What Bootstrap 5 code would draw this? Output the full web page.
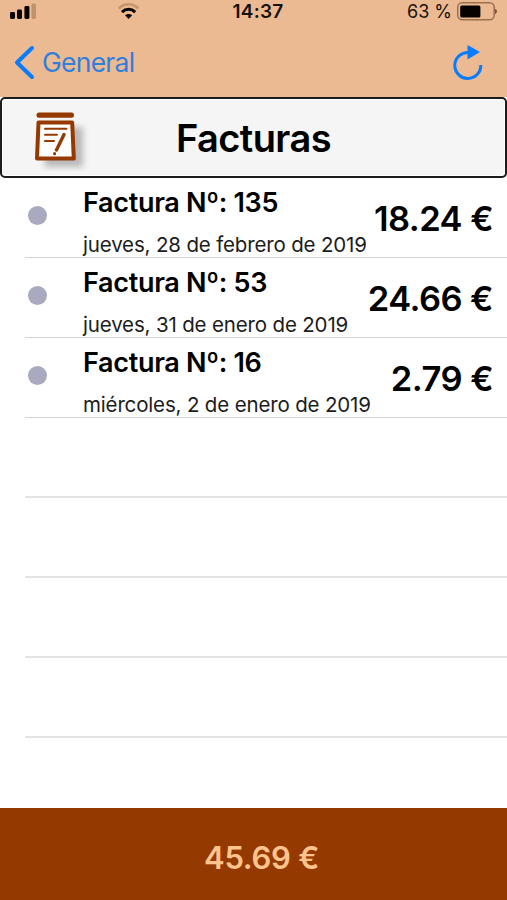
<!DOCTYPE html>
<html lang="es">
<head>
<meta charset="utf-8">
<meta name="viewport" content="width=device-width, initial-scale=1">
<title>Facturas</title>
<link href="https://cdn.jsdelivr.net/npm/bootstrap@5.3.0/dist/css/bootstrap.min.css" rel="stylesheet">
<style>
  body { font-family: Inter, "Liberation Sans", sans-serif; color: #000; }
  .screen { height: 900px; }
  svg { display: block; flex: none; }
  .app-top { height: 97px; background: #ebba93; }
  .status { height: 24px; padding: 0 9px; font-size: 18px; line-height: 24px; color: #17110c; }
  .status-side { flex: 1 1 0; }
  .clock { font-size: 19px; font-weight: 600; letter-spacing: .2px; padding-left: 9px; }
  .wifi { margin-left: 81px; }
  .navline { height: 73px; padding: 4px 23px 0 14px; }
  .back { color: #2f7fdc; font-size: 26.500px; letter-spacing: -.75px; line-height: 32px; }
  .back span { margin-top: -1px; }
  .heading { height: 81px; border: 2px solid #1c1c1e; border-radius: 5px; background: #f5f5f5; box-shadow: inset 0 0 0 1px #fff; padding: 0 24px 0 32px; }
  .heading h1 { font-size: 38px; font-weight: 600; line-height: 46px; letter-spacing: -.6px; }
  .line-row { height: 80px; margin-left: 25px; border-bottom: 2px solid #e3e3e5; }
  article.line-row { border-bottom: 1px solid #d3d3d5; }
  .dot { width: 19px; height: 19px; background: #a8abc0; margin: 28px 0 0 3px; }
  .detail { margin-left: 36px; }
  .number { font-size: 27px; font-weight: 600; line-height: 32px; letter-spacing: -.3px; margin-top: 9px; }
  .date { font-size: 20.500px; line-height: 24px; letter-spacing: -.16px; margin-top: 14px; color: #1c1c1c; }
  .price { font-size: 34.500px; font-weight: 600; line-height: 40px; letter-spacing: -.55px; margin-top: 21px; padding-right: 14px; }
  .total { height: 92px; background: #943a00; color: #ffc38f; font-size: 31px; font-weight: 600; letter-spacing: -.3px; padding: 8px 0 0 16px; }
</style>
</head>
<body class="bg-white">
<div class="screen d-flex flex-column overflow-hidden">
  <header class="app-top">
    <div class="status d-flex align-items-center">
      <div class="status-side d-flex align-items-center">
        <svg width="28" height="24" viewBox="0 0 28 24"><g fill="#080402"><rect x="1" y="12" width="5" height="7" rx="1.4"/><rect x="8" y="9.500" width="5" height="9.500" rx="1.400"/><rect x="15.400" y="6" width="5" height="13" rx="1.400"/></g><rect x="22.500" y="3.500" width="4.500" height="15.500" rx="1.400" fill="#be946f"/></svg>
        <svg class="wifi" width="22" height="24" viewBox="0 0 22 24" fill="none" stroke-width="2.600"><path d="M.8 8.500C6.300 2.900 14.900 2.900 20.400 8.500" stroke="#c49770"/><path d="M4 12.100C7.800 8.400 13.400 8.400 17.200 12.100" stroke="#080402" stroke-width="3"/><path d="M7 15.300Q10.600 12.500 14.200 15.300L10.600 19Z" fill="#080402"/></svg>
      </div>
      <span class="clock">14:37</span>
      <div class="status-side d-flex align-items-center justify-content-end">
        <span>63 %</span>
        <svg width="42" height="24" viewBox="0 0 42 24" class="ms-1"><rect x="1.700" y="2.800" width="36.500" height="17" rx="4.500" fill="none" stroke="#997150" stroke-width="1.500"/><rect x="4.200" y="5.400" width="20.200" height="12" rx="1.500" fill="#050200"/><path d="M39.500 9q2.300 2.300 0 4.600Z" fill="#80583b" stroke="#80583b"/></svg>
      </div>
    </div>
    <nav class="navline d-flex align-items-center justify-content-between">
      <a href="#" class="back d-flex align-items-center text-decoration-none">
        <svg width="28" height="36" viewBox="0 0 28 36" fill="none" stroke="#087cff" stroke-width="4" stroke-linecap="round" stroke-linejoin="round"><path d="M18 3L3 17.500 18 32"/></svg>
        <span>General</span>
      </a>
      <svg width="32" height="38" viewBox="0 0 32 38"><path d="M17 8.500A13 13 0 1 0 28.800 21" fill="none" stroke="#087cff" stroke-width="3"/><path d="M15.500 1L28 8 15.500 15.500Z" fill="#087cff"/></svg>
    </nav>
  </header>
  <section class="heading d-flex align-items-center position-relative">
    <svg width="56" height="66" viewBox="0 0 56 66">
      <defs><filter id="soft" x="-30%" y="-30%" width="160%" height="160%"><feGaussianBlur stdDeviation="3"/></filter></defs>
      <path d="M11 22H49V62H11Z" fill="#b9b9b9" filter="url(#soft)"/>
      <rect x="2.500" y="7.500" width="37.500" height="5.200" rx="2.500" fill="#943a00"/>
      <path d="M4.500 17.500H38.200L39.800 53.500H3Z" fill="#fff" stroke="#943a00" stroke-width="4" stroke-linejoin="round"/>
      <path d="M11 23.700H32.500M11 29.700H23M11 36H20" stroke="#943a00" stroke-width="2" stroke-linecap="round"/>
      <path d="M30 29.500L22.500 45" stroke="#943a00" stroke-width="3.400" stroke-linecap="round"/><circle cx="20.600" cy="48.700" r="1.600" fill="#943a00"/>
    </svg>
    <h1 class="position-absolute start-0 end-0 text-center m-0">Facturas</h1>
  </section>
  <main class="flex-grow-1">
    <article class="line-row d-flex align-items-start">
      <span class="dot rounded-circle"></span>
      <div class="detail"><div class="number">Factura Nº: 135</div><div class="date">jueves, 28 de febrero de 2019</div></div>
      <div class="price ms-auto text-nowrap">18.24 €</div>
    </article>
    <article class="line-row d-flex align-items-start">
      <span class="dot rounded-circle"></span>
      <div class="detail"><div class="number">Factura Nº: 53</div><div class="date">jueves, 31 de enero de 2019</div></div>
      <div class="price ms-auto text-nowrap">24.66 €</div>
    </article>
    <article class="line-row d-flex align-items-start">
      <span class="dot rounded-circle"></span>
      <div class="detail"><div class="number">Factura Nº: 16</div><div class="date">miércoles, 2 de enero de 2019</div></div>
      <div class="price ms-auto text-nowrap">2.79 €</div>
    </article>
    <div class="line-row"></div>
    <div class="line-row"></div>
    <div class="line-row"></div>
    <div class="line-row"></div>
  </main>
  <footer class="total d-flex align-items-center justify-content-center">45.69 €</footer>
</div>
<script src="https://cdn.jsdelivr.net/npm/bootstrap@5.3.0/dist/js/bootstrap.bundle.min.js"></script>
</body>
</html>
